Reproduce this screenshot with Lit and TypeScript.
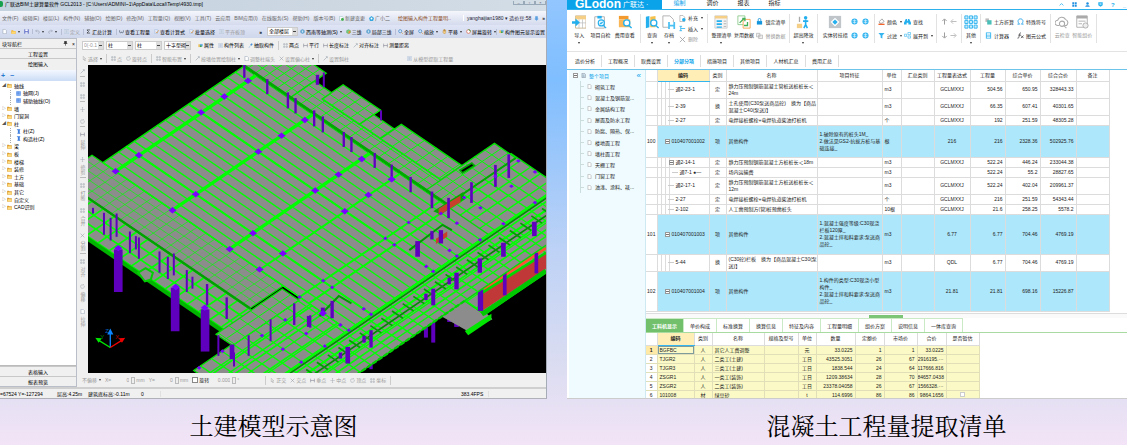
import { LitElement, html, svg, css, nothing } from "lit";
import { customElement } from "lit/decorators.js";
import { classMap } from "lit/directives/class-map.js";

/* ---------- icons, drawn on a 16 x 16 grid ---------- */
const glyphs: Record<string, unknown> = {
  page: svg`<path d="M3 1h7l4 4v10H3z" fill="#fff" stroke="#7c8ba0" stroke-width="1.4"/>`,
  pageGreen: svg`<path d="M2 1h8l3 3v11H2z" fill="#fff" stroke="#7aa" stroke-width="1.4"/><circle cx="11" cy="11" r="4.5" fill="#3fae49"/>`,
  star: svg`<path d="M8 0l8 6-3 10H3L0 6z" fill="#38a7e0"/><circle cx="8" cy="8" r="3" fill="#fff"/>`,
  open: svg`<path d="M1 4h6l1 2h7v9H1z" fill="#f2b632"/><path d="M4 8h12l-3 7H1z" fill="#ffd873"/>`,
  save: svg`<path d="M1 1h14v14H1z" fill="#5867c4"/><path d="M4 1h8v6H4zM4 10h8v5H4z" fill="#fff"/>`,
  undo: svg`<path d="M2 6h8a4 4 0 010 8M6 2L2 6l4 4" fill="none" stroke="#9aa3b5" stroke-width="2"/>`,
  redo: svg`<path d="M14 6H6a4 4 0 000 8M10 2l4 4-4 4" fill="none" stroke="#9aa3b5" stroke-width="2"/>`,
  list: svg`<path d="M1 2h14v12H1z" fill="#f2f6fb" stroke="#9db0cc" stroke-width="1.4"/><path d="M4 5h8M4 8h8M4 11h8" stroke="#8aa0c0" stroke-width="1.4"/>`,
  sigma: svg`<path d="M13 3H3l5 5-5 5h10" fill="none" stroke="#222" stroke-width="2"/>`,
  glasses: svg`<path d="M2 4v5a3 3 0 006 0 3 3 0 006 0V4" fill="none" stroke="#456" stroke-width="2"/>`,
  check: svg`<path d="M2 2h9v12H2z" fill="#e6eefb" stroke="#7d9dd0"/><path d="M6 9l3 4 6-9" fill="none" stroke="#d78a2a" stroke-width="2"/>`,
  drop: svg`<path d="M8 1l6 4v6l-6 4-6-4V5z" fill="#6fb3de" stroke="#33739f"/><path d="M8 5v6" stroke="#fff" stroke-width="2"/>`,
  cube: svg`<path d="M2 5l6-3 6 3v7l-6 3-6-3z" fill="#7ad07a" stroke="#2a8a3a"/><path d="M8 8v7l6-3V5z" fill="#e98b3a"/>`,
  lens: svg`<circle cx="7" cy="7" r="5" fill="#cfe6fa" stroke="#3b7fc4" stroke-width="2"/><path d="M11 11l4 4" stroke="#d68b2a" stroke-width="2.4"/>`,
  hand: svg`<path d="M4 8V4h2v3-6h2v6-5h2v5-3h2v7l-2 4H6L2 9z" fill="#f6cf83" stroke="#a9772c"/>`,
  spin: svg`<circle cx="8" cy="8" r="6" fill="#fff" stroke="#d6553b" stroke-width="2"/><path d="M8 2a6 6 0 016 6" fill="none" stroke="#35a146" stroke-width="3"/>`,
  props: svg`<path d="M1 4h8v9H1z" fill="#f1c35b"/><path d="M6 3h9v8H6z" fill="#6fb0e6"/><circle cx="9" cy="10" r="3" fill="#3aa24a"/>`,
  pick: svg`<path d="M2 14L9 7l-2-2 5-4 3 3-4 5-2-1-6 7z" fill="#4a90d9"/>`,
  dots: svg`<path d="M2 2h4v4H2zM10 2h4v4h-4zM2 10h4v4H2zM10 10h4v4h-4z" fill="none" stroke="#98a0ab" stroke-width="1.6"/>`,
  rule: svg`<path d="M2 2v12M14 2v12M2 8h12" fill="none" stroke="#778" stroke-width="1.6"/>`,
  slash: svg`<path d="M2 14L13 3M9 2h5v5" fill="none" stroke="#98a0ab" stroke-width="1.8"/>`,
  cursor: svg`<path d="M4 1l8 8H8l3 6-2 1-3-6-2 2z" fill="none" stroke="#999" stroke-width="1.3"/>`,
  ring: svg`<path d="M13 5a6 6 0 11-5-3M8 0l4 2-4 3" fill="none" stroke="#a5abb3" stroke-width="1.8"/>`,
  cross: svg`<path d="M2 2l12 12M14 2L2 14" stroke="#9a9fa6" stroke-width="1.8"/>`,
  move: svg`<path d="M8 1v14M1 8h14M6 3l2-2 2 2M6 13l2 2 2-2" fill="none" stroke="#a5abb3" stroke-width="1.6"/>`,
  folder: svg`<path d="M1 3h5l2 2h7v9H1z" fill="#eba52c" stroke="#b5760f"/><path d="M3 7h12v7H2z" fill="#ffdf85"/>`,
  net: svg`<path d="M1 1h14v14H1z" fill="#3f7fe0"/><path d="M6 1v14M11 1v14M1 6h14M1 11h14" stroke="#bcd5ff" stroke-width="1.2"/>`,
  column: svg`<path d="M2 1h12l-2 4v6l2 4H4l2-4V5z" fill="#3f7fe0"/>`,
  user: svg`<circle cx="8" cy="5" r="4" fill="#1f8fe0"/><path d="M1 15c0-6 14-6 14 0z" fill="#1f8fe0"/>`,
  bell: svg`<path d="M4 1h8v8h3l-7 6-7-6h3z" fill="#5b9fe0"/>`,
  doc: svg`<path d="M3 1h7l3 4v10H3z" fill="#fff" stroke="#8a8a8a" stroke-width="1.4"/>`,
  home: svg`<path d="M3 1h8l3 3v11H3z" fill="#dff3fc" stroke="#667" stroke-width="1.4"/><path d="M5 6h6M5 9h6M5 12h6" stroke="#456"/>`,
  import: svg`<path d="M4 1h12v14H4z" fill="#fff" stroke="#c9b48c"/><path d="M4 1h12v4H4z" fill="#f6cf86"/><path d="M4 9h12M8 5v10M12 5v10" stroke="#bbb" stroke-width=".8"/><path d="M0 7h4V4l5 4.500-5 4.500v-3H0z" fill="#24b0ee"/>`,
  selfcheck: svg`<path d="M2 2h11v13H2z" fill="#fff" stroke="#aaa"/><path d="M5 1h5v3H5z" fill="#24b0ee"/><circle cx="9.500" cy="9" r="3.500" fill="#e7f7ff" stroke="#24b0ee" stroke-width="1.300"/><path d="M12 12l3 3M8 9l1 1 2-2" fill="none" stroke="#24b0ee" stroke-width="1.300"/>`,
  fee: svg`<path d="M1 1h11v4H1z" fill="#f39a2e"/><path d="M1 5h13v9H1z" fill="#fbb757"/><circle cx="10" cy="9" r="3.500" fill="#fff" stroke="#24b0ee" stroke-width="1.500"/><path d="M12.500 12l3 3" stroke="#24b0ee" stroke-width="1.600"/>`,
  query: svg`<path d="M1 2l4-1v13l-4 1z" fill="#24b0ee"/><path d="M6 2l6-1v13H6z" fill="#f6c04c"/><circle cx="10" cy="9" r="3.500" fill="#fff" stroke="#24b0ee" stroke-width="1.500"/><path d="M12.500 12l3 3" stroke="#24b0ee" stroke-width="1.600"/>`,
  archive: svg`<path d="M1 1h8l4 4v9H1z" fill="#fff" stroke="#aaa"/><path d="M7 8h8v8H7z" fill="#4cc0f2"/><path d="M9 8h4v3H9zM9 13h4v3H9z" fill="#fff"/>`,
  tidy: svg`<path d="M1 1h14v14H1z" fill="#f4f4f4" stroke="#ccc"/><path d="M1 1h14v3H1z" fill="#f6cf86"/><path d="M3 6h6v2H3zM3 9.500h6v2H3zM3 13h6v1.500H3z" fill="#24b0ee"/><path d="M11 7h3M11 10h3M11 13h3" stroke="#aaa"/>`,
  reuse: svg`<path d="M1 1h8v10H1z" fill="#fff" stroke="#8cc98c"/><path d="M7 5h8v10H7z" fill="#fff" stroke="#f3a24c"/><path d="M3 9l5-5M6 4h3v3M8 12h4V8" fill="none" stroke="#3fb058" stroke-width="1.500"/>`,
  lock: svg`<path d="M2 7h12v8H2z" fill="#1596dc"/><path d="M5 7V4a3 3 0 016 0v3" fill="none" stroke="#1596dc" stroke-width="2"/>`,
  swap: svg`<path d="M1 3h8v8H1zM6 7h9v8H6z" fill="#eee" stroke="#aaa" stroke-width="1.400"/>`,
  tall: svg`<circle cx="11" cy="3" r="2" fill="#24b0ee"/><path d="M8 7h6M11 5v6M9 15l2-4 2 4" stroke="#24b0ee" stroke-width="1.800" fill="none"/><path d="M1 10h6v5H1z" fill="#f6cf86"/><path d="M4 2v6" stroke="#aaa" stroke-width="1.500"/>`,
  solid: svg`<path d="M1 1h14v14H1z" fill="#bfc5c9"/><path d="M3 8l5-5 5 5-5 5z" fill="#fff"/><path d="M5 8l3-3 3 3-3 3z" fill="#24b0ee"/>`,
  globe: svg`<circle cx="8" cy="8" r="7" fill="#35b5ef"/><path d="M4 6h8M4 10h8M8 3v10" stroke="#dff4ff" stroke-width="1.500"/>`,
  paint: svg`<path d="M3 8l6-6 5 6-5 4H4z" fill="#fff" stroke="#777" stroke-width="1.400"/><path d="M1 13h14v3H1z" fill="#f2662b"/>`,
  binoc: svg`<path d="M4 2h3v4h2V2h3l4 9v4h-6v-4H6v4H0v-4z" fill="#24b0ee"/>`,
  funnel: svg`<path d="M1 2h14l-5 6v7l-4-2V8z" fill="#35b5ef"/>`,
  expand: svg`<path d="M1 5h5v5H1zM9 1h6v5H9zM9 9h6v5H9z" fill="#fff" stroke="#35b5ef" stroke-width="1.400"/>`,
  up: svg`<path d="M8 15V3M3 7l5-5 5 5" fill="none" stroke="#9a9a9a" stroke-width="2.200"/>`,
  down: svg`<path d="M8 1v12M3 9l5 5 5-5" fill="none" stroke="#9a9a9a" stroke-width="2.200"/>`,
  left: svg`<path d="M15 8H3M7 3L2 8l5 5" fill="none" stroke="#bbb" stroke-width="2.200"/>`,
  right: svg`<path d="M1 8h12M9 3l5 5-5 5" fill="none" stroke="#bbb" stroke-width="2.200"/>`,
  other: svg`<g fill="#c9ecfb" stroke="#35b5ef" stroke-width="1.100"><path d="M1 1h3.500v3.500H1zM6.200 1h3.500v3.500H6.200zM11.500 1H15v3.500h-3.500zM1 6.200h3.500v3.500H1zM6.200 6.200h3.500v3.500H6.200zM11.500 6.200H15v3.500h-3.500zM1 11.500h3.500V15H1zM6.200 11.500h3.500V15H6.200zM11.500 11.500H15V15h-3.500z"/></g>`,
  earth: svg`<path d="M1 1h8v8H1z" fill="#bbb"/><path d="M5 5h10v10H5z" fill="#4cc0b8"/>`,
  omega: svg`<path d="M1 14h5c-6-5-4-12 2-12s8 7 2 12h5" fill="none" stroke="#24a0e8" stroke-width="2"/>`,
  calc: svg`<path d="M2 1h12v14H2z" fill="#35b5ef"/><path d="M4 3h8v3H4zM4 8h8v1.500H4zM4 11h8v2H4z" fill="#fff"/>`,
  fx: svg`<path d="M9 2c-3-1-3 3-4 7s-1 6-4 5M3 7h6M9 8l6 6M15 8l-6 6" fill="none" stroke="#333" stroke-width="1.600"/>`,
  cloud: svg`<path d="M5 12H3a3 3 0 010-6 5 5 0 019-1 4 4 0 011 7h-2" fill="none" stroke="#aaa" stroke-width="1.200"/><circle cx="8" cy="10" r="3" fill="none" stroke="#aaa" stroke-width="1.200"/><path d="M10 12l3 3" stroke="#aaa" stroke-width="1.200"/>`,
  smart: svg`<path d="M2 1h12v13H2z" fill="#fff" stroke="#aaa"/><path d="M2 1h12v3H2z" fill="#aaa"/><path d="M4 7h8M4 10h4" stroke="#aaa"/><circle cx="12" cy="12" r="3" fill="#eee" stroke="#aaa"/>`,
  plusDoc: svg`<path d="M2 1h7l4 4v10H2z" fill="#fff" stroke="#999" stroke-width="1.400"/><circle cx="11" cy="11" r="4" fill="#24b0ee"/>`,
  insert: svg`<path d="M1 3h6M1 13h6M4 3v10M4 8h10" fill="none" stroke="#24b0ee" stroke-width="1.800"/>`,
  chevUp: svg`<path d="M2 11l6-6 6 6" fill="none" stroke="#24b0ee" stroke-width="2.500"/>`,
  blocks: svg`<path d="M1 1h6v6H1zM9 1h6v6H9zM1 9h6v6H1zM9 9h6v6H9z" fill="#1f8fe0"/>`,
  shield: svg`<path d="M1 1h14v9l-7 5-7-5z" fill="#24b0ee"/><path d="M5 5h6v3H5z" fill="#fff"/>`,
  pin: svg`<path d="M5 1h6v7H5zM2 8h12M8 8v7" fill="#333" stroke="#333" stroke-width="2"/>`,
};
const icon = (name: string) => svg`<svg class="ic" viewBox="0 0 16 16" aria-hidden="true">${glyphs[name]}</svg>`;

/* ---------- building model ---------- */
const SLOPE = 0.683;
type P = [number, number];
/* k grows towards the front right, m towards the front left */
const pt = (k: number, m: number): P => [Math.round((k - m) / (2 * SLOPE)), Math.round((k + m) / 2)];
const line = (a: P, b: P) => `M${a[0]} ${a[1]}L${b[0]} ${b[1]}`;
const beamsK = (ks: number[], m1: number, m2: number, w: number, color = "#00ff00") =>
  svg`<path d=${ks.map((k) => line(pt(k, m1), pt(k, m2))).join("")} stroke=${color} stroke-width=${w} fill="none"/>`;
const beamsM = (ms: number[], k1: number, k2: number, w: number, color = "#00ff00") =>
  svg`<path d=${ms.map((m) => line(pt(k1, m), pt(k2, m))).join("")} stroke=${color} stroke-width=${w} fill="none"/>`;
const steps = (a: number, b: number, s: number) => {
  const out: number[] = [];
  for (let v = a; v <= b; v += s) out.push(v);
  return out;
};
const slab = (k1: number, k2: number, m1: number, m2: number, ks: number, ms: number, w: number) => svg`
  <polygon points=${[pt(k1, m1), pt(k2, m1), pt(k2, m2), pt(k1, m2)].join(" ")} fill="#8c8c8c" stroke="#00e000" stroke-width="4"/>
  ${beamsK(steps(k1 + ks, k2, ks), m1, m2, w)}${beamsM(steps(m1 + ms, m2, ms), k1, k2, w)}`;
const posts = (list: number[][], color = "#5f00bf") =>
  svg`${list.map(([x, y1, y2, w]) => svg`<rect x=${x - w / 2} y=${y1} width=${w} height=${y2 - y1} fill=${color}/>`)}`;
const nodes = (list: P[], r: number) =>
  svg`<path d=${list.map(([x, y]) => `M${x - r} ${y}l${r} ${-r * 0.8}l${r} ${r * 0.8}l${-r} ${r * 0.8}z`).join("")} fill="#7a00ff"/>`;

const model = () => svg`
<svg class="model" viewBox="24 15 1377 927" preserveAspectRatio="xMidYMid slice" role="img" aria-label="土建模型">
  ${posts([[1040, 780, 835, 12], [1062, 780, 850, 12], [1110, 730, 788, 12], [1132, 730, 803, 14], [875, 880, 930, 10]])}
  <polygon points="1085,770 1175,715 1240,780 1165,815" fill="#8c8c8c"/>
  <path d="M1157 815l80-52v18l-70 47z" fill="#00e600"/>
  ${slab(1480, 1597, -640, -65, 40, 44, 4)}
  <polygon points="1205,703 1401,578 1401,628 1205,757" fill="#c03838"/>
  <path d="M1215 690L1401 566" stroke="#ff5030" stroke-width="8"/>
  <path d="M1208 765L1401 635" stroke="#00c800" stroke-width="14"/>
  <path d="M1205 703L1401 580" stroke="#00d800" stroke-width="8"/>
  ${posts([[1204, 690, 755, 16], [1277, 640, 708, 11], [1372, 580, 642, 11]])}
  ${slab(311, 1115, 400, 516, 46, 38, 5)}
  <path d=${line(pt(311, 522), pt(1115, 522))} stroke="#00b400" stroke-width="12"/>
  <path d="M175 640l22-14 22 14-6 20-18 6z" fill="#8c8c8c" stroke="#00d000" stroke-width="6"/>
  ${slab(1167, 1514, -604, 700, 40, 44, 4)}
  ${beamsK([1216, 1262, 1320], 120, 700, 5)}
  ${slab(311, 1096, 262, 398, 36, 27, 2)}
  ${beamsM([398], 311, 1096, 7, "#00a000")}
  ${slab(1104, 1172, 273, 545, 34, 44, 3)}
  ${slab(356, 1363, -314, 262, 1007, 32, 4)}
  ${beamsK([408, 642, 876], -314, 262, 10)}
  ${beamsK([999, 1164, 1202], -314, 262, 6)}
  ${beamsM([166, -90], 356, 1363, 6)}
  ${slab(280, 545, -466, -320, 30, 29, 3)}
  ${slab(545, 1180, -418, -320, 40, 24, 3)}
  ${slab(615, 768, -466, -380, 38, 28, 3)}
  ${slab(768, 852, -438, -380, 42, 28, 3)}
  ${slab(853, 1102, -466, -380, 48, 28, 3)}
  ${slab(1102, 1190, -600, -320, 29, 40, 3)}
  ${beamsM([-320], 300, 1190, 7, "#00a800")}
  ${beamsK([1190], -600, -320, 6, "#00a800")}
  <path d="M1142 332l36-22 8 8-36 22z" fill="#000" stroke="#00b000" stroke-width="5"/>
  <path d="M1062 455l90-58 4 22-72 46z" fill="#00a800"/>
  <path d="M1078 448l66-40v20l-66 40zM1070 538l34-22v16l-34 22z" fill="#c8402c"/>
  <path d="M990 572l100-76 28 16M720 770l58-60 38 22" fill="none" stroke="#009800" stroke-width="6"/>
  ${beamsK([1363, 1384, 1410, 1440, 1468], -604, 600, 5)}
  ${beamsK([1373, 1425], -604, 600, 5, "#008c00")}
  ${beamsM(steps(-590, 490, 44), 1395, 1440, 5, "#00a000")}
  <path d=${line(pt(1514, -65), pt(1514, 700))} stroke="#00d000" stroke-width="7" stroke-dasharray="14 6"/>
  ${posts([
    [115, 570, 698, 26], [286, 685, 816, 26], [376, 750, 877, 26], [72, 460, 526, 6], [92, 475, 543, 6], [110, 462, 532, 6], [150, 516, 581, 6],
    [168, 530, 570, 6], [177, 534, 598, 6], [239, 576, 640, 6], [264, 592, 659, 6], [282, 582, 648, 6], [321, 632, 698, 6], [338, 652, 688, 6],
    [382, 674, 738, 7], [441, 714, 779, 7], [416, 828, 890, 6], [457, 856, 900, 14], [463, 880, 922, 6], [507, 828, 890, 6], [573, 780, 846, 6], [644, 732, 797, 7],
    [688, 770, 803, 12], [39, 445, 462, 6], [494, 15, 54, 7], [563, 58, 103, 7], [625, 98, 146, 7], [648, 115, 161, 7], [704, 152, 200, 7],
    [730, 170, 218, 7], [733, 38, 82, 6], [714, 45, 75, 10], [793, 217, 262, 7], [816, 232, 277, 7], [886, 280, 325, 7], [905, 152, 182, 6], [937, 315, 360, 7], [994, 352, 398, 7],
    [1058, 396, 446, 8], [1108, 415, 476, 8], [1177, 368, 430, 8], [1249, 316, 382, 8], [1289, 284, 355, 8], [1015, 545, 592, 14], [1085, 512, 552, 13], [1058, 515, 540, 10],
    [730, 745, 768, 12], [758, 725, 777, 10], [692, 768, 805, 7], [1366, 487, 530, 14], [1273, 550, 592, 14], [1202, 597, 640, 13], [1132, 640, 690, 13],
    [1062, 688, 738, 12], [1110, 655, 675, 10], [1040, 703, 722, 10], [875, 813, 865, 10], [854, 830, 850, 10], [805, 863, 913, 14], [783, 880, 898, 10],
  ])}
  ${nodes([[107, 335], [177, 287], [364, 158], [434, 110], [505, 63], [278, 452], [348, 404], [536, 276], [606, 228], [676, 181], [450, 569], [520, 521],
    [707, 393], [777, 345], [847, 298], [540, 630], [610, 582], [796, 455], [867, 406], [937, 359], [115, 566], [288, 683], [375, 745], [730, 762]], 12)}
  ${nodes([[660, 713], [731, 664], [758, 684], [918, 537], [988, 489], [945, 556], [853, 749], [875, 765], [1062, 636], [1203, 541], [1273, 493], [1368, 429],
    [1133, 590], [808, 813], [736, 861], [610, 870], [665, 909], [547, 829], [680, 823], [1041, 621], [1111, 573], [1133, 491], [1204, 445], [1155, 414],
    [1249, 350], [1297, 380], [1318, 304], [1368, 337], [783, 797], [428, 876], [617, 782], [1085, 462], [358, 926]], 7)}
  <g fill="none" stroke-width="4">
    <path d="M91 865V816M85 824l6-12 6 12z" stroke="#0a84ff" fill="#0a84ff"/>
    <path d="M91 865L54 842M50 838l12 1-6 8z" stroke="#00e600" fill="#00e600"/>
    <path d="M91 865L128 842M132 838l-12 1 6 8z" stroke="#f00000" fill="#f00000"/>
  </g>
  <text x="76" y="822" font-size="18" fill="#0a60c0">Z</text>
  <text x="61" y="840" font-size="18" fill="#009000">Y</text>
  <text x="106" y="840" font-size="18" fill="#b00000">X</text>
</svg>`;

/* ---------- data ---------- */
const menus = ["文件(F)", "编辑(E)", "楼层(L)", "构件(N)", "辅轴(O)", "绘图(D)", "修改(M)", "工程量(Q)", "视图(V)", "工具(T)", "云应用", "BIM应用(I)", "在线服务(S)", "帮助(H)", "版本号(B)"];
const tree: [number, string, string, string][] = [
  [0, "◢", "folder", "轴线"], [1, "", "net", "轴网(J)"], [1, "", "net", "辅助轴线(O)"], [0, "▷", "folder", "墙"], [0, "▷", "folder", "门窗洞"],
  [0, "◢", "folder", "柱"], [1, "", "column", "柱(Z)"], [1, "", "column", "构造柱(Z)"], [0, "▷", "folder", "梁"], [0, "▷", "folder", "板"],
  [0, "▷", "folder", "楼梯"], [0, "▷", "folder", "装修"], [0, "▷", "folder", "土方"], [0, "▷", "folder", "基础"], [0, "▷", "folder", "其它"],
  [0, "▷", "folder", "自定义"], [0, "▷", "folder", "CAD识别"],
];
const sideTools: [string, string][] = [["slash", ""], ["dots", ""], ["dots", ""], ["move", ""], ["ring", ""], ["rule", "延伸"], ["move", "修剪"], ["dots", "打断"], ["dots", "合并"], ["cross", "分割"], ["dots", "对齐"], ["ring", "偏移"], ["page", "拉伸"]];
const projects = ["砌筑工程", "混凝土及钢筋混...", "金属结构工程", "屋面及防水工程", "防腐、隔热、保...", "楼地面工程", "墙柱面工程", "天棚工程", "门窗工程", "油漆、涂料、裱..."];

interface Item { no?: string; lvl: number; code: string; kind: string; name: string; spec?: string; unit: string; expr: string; qty: string; price: string; total: string; size: string; hot?: boolean }
const items: Item[] = [
  { lvl: 2, code: "通2-23-1", kind: "定", name: "静力压预制钢筋混凝土管桩送桩桩长＜\n24m", unit: "m3", expr: "GCLMXXJ", qty: "504.56", price: "650.95", total: "328443.33", size: "mid" },
  { lvl: 2, code: "2-39", kind: "换", name: "土孔使用(C30泵送商品砼)　换为【商品\n混凝土C40(泵送)】", unit: "m3", expr: "GCLMXXJ", qty: "66.35", price: "607.41", total: "40301.65", size: "mid" },
  { lvl: 2, code: "2-27", kind: "定", name: "电焊接桩螺栓+电焊轨道柴油打桩机", unit: "个", expr: "GCLMXXJ", qty: "192", price: "251.59", total: "48305.28", size: "low" },
  { no: "100", lvl: 1, code: "010407001002", kind: "项", name: "其他构件", spec: "1.破除原有的桩头1M_\n2.做法见GS2-抗拔方桩与基\n础连接_", unit: "根", expr: "216", qty: "216", price: "2328.36", total: "502925.76", size: "big", hot: true },
  { lvl: 3, code: "通2-14-1", kind: "定", name: "静力压预制钢筋混凝土方桩桩长＜18m", unit: "m3", expr: "GCLMXXJ", qty: "522.24", price: "446.24", total: "233044.38", size: "low" },
  { lvl: 4, code: "通7-1 ●—", kind: "定", name: "场内运输费", unit: "m3", expr: "", qty: "522.24", price: "55.2", total: "28827.65", size: "low" },
  { lvl: 2, code: "通2-17-1", kind: "定", name: "静力压预制钢筋混凝土方桩送桩桩长＜\n12m", unit: "m3", expr: "GCLMXXJ", qty: "522.24", price: "402.04", total: "209961.37", size: "mid" },
  { lvl: 2, code: "2-27", kind: "定", name: "电焊接桩螺栓+电焊轨道柴油打桩机", unit: "个", expr: "GCLMXXJ", qty: "216", price: "251.59", total: "54343.44", size: "low" },
  { lvl: 2, code: "2-102", kind: "定", name: "人工凿预制方(管)桩预凿桩头", unit: "10根", expr: "GCLMXXJ", qty: "21.6", price: "258.25", total: "5578.2", size: "low" },
  { no: "101", lvl: 1, code: "010407001003", kind: "项", name: "其他构件", spec: "1.混凝土强度等级:C30现浇\n栏板120厚_\n2.混凝土拌和料要求:泵送商\n品砼_", unit: "m3", expr: "6.77", qty: "6.77", price: "704.46", total: "4769.19", size: "huge", hot: true },
  { lvl: 2, code: "5-44", kind: "换", name: "(C30砼)栏板　换为【商品混凝土C30(泵\n送)】", unit: "m3", expr: "QDL", qty: "6.77", price: "704.46", total: "4769.19", size: "mid" },
  { no: "102", lvl: 1, code: "010407001004", kind: "项", name: "其他构件", spec: "1.构件的类型:C30现浇小型\n构件_\n2.混凝土拌和料要求:泵送商\n品砼_", unit: "m3", expr: "21.81", qty: "21.81", price: "698.16", total: "15226.87", size: "huge", hot: true },
];
const labour: string[][] = [
  ["BGFBC", "人", "其它人工费调整", "", "元", "33.0225", "1", "1", "33.0225"],
  ["TJGR2", "人", "二类工(土建)", "", "工日", "43525.3051", "26", "67", "2916195.···"],
  ["TJGR3", "人", "三类工(土建)", "", "工日", "1838.544", "24", "64", "117666.816"],
  ["ZSGR1", "人", "一类工(装饰)", "", "工日", "1209.38634", "28", "70", "84657.0438"],
  ["ZSGR2", "人", "二类工(装饰)", "", "工日", "23378.04058", "26", "67", "1566328.···"],
  ["101008", "材", "绿豆砂", "", "t", "114.6996", "86", "86", "9864.1656"],
];

const base = css`
  * { box-sizing: border-box; }
  button, select, input { font: inherit; color: inherit; margin: 0; padding: 0; border: 0; background: none; border-radius: 0; min-width: 0; }
  button { display: flex; align-items: center; gap: 1px; white-space: nowrap; }
  .ic { width: 5px; height: 5px; flex: none; display: block; }
  .caret::after { content: ""; border: 1px solid transparent; border-top: 2px solid #333; border-bottom: 0; margin-left: 1px; }
  .dim { color: #999; }
`;

@customElement("takeoff-window")
class TakeoffWindow extends LitElement {
  static styles = [base, css`
    :host { display: grid; grid-template-rows: 11px 14px 13px minmax(0, 1fr) 11px; min-width: 0; min-height: 0; overflow: hidden; background: #f0f0f0; color: #000;
      font: 5px/6px "Liberation Sans", "Noto Sans CJK SC", sans-serif; border-right: 1px solid #a5acb8; border-bottom: 1px solid #b0b0b8; }
    .title { display: flex; align-items: flex-start; gap: 2px; padding-top: 1px; background: linear-gradient(90deg, #c4d2df, #ccd7e2 60%, #d3dde6); }
    .logo { width: 3px; height: 6px; background: #18a14c; border-radius: 0 2px 2px 0; }
    .caps { margin-left: auto; display: flex; }
    .caps button { width: 11px; height: 4px; justify-content: center; border: 1px solid #9aa9b8; border-top: 0; font-size: 4px; color: #556; }
    .menu { display: flex; align-items: center; gap: 4px; padding-left: 2px; background: linear-gradient(#f4f6fb, #d5dbee); color: #666; overflow: hidden; }
    .tip { margin: 0 0 0 4px; color: #8a4a1b; }
    .who { margin-left: auto; display: flex; gap: 3px; align-items: center; color: #223; border-left: 1px solid #fff; padding: 0 1px 0 3px; }
    .bar { display: flex; align-items: center; gap: 4px; overflow: hidden; min-width: 0; }
    .bar > * { flex: none; }
    .main { background: linear-gradient(#dfe5f5, #cfd7ec); padding-left: 2px; display: grid; grid-template-columns: 30px 29px 22px 33px 151px 33px 95px 101px 1fr; gap: 0; }
    .bar .grp { display: flex; align-items: center; gap: 4px; min-width: 0; overflow: hidden; }
    .lined { border-left: 1px solid #b6bfd6; padding-left: 2px; }
    .more { margin-left: auto; margin-right: 5px; }
    select { appearance: none; background: linear-gradient(#444, #444) right 1px center / 3px 1px no-repeat, linear-gradient(90deg, transparent calc(100% - 5px), #ddd 0), #fff; border: 1px solid #ccc; height: 9px; width: 27px; padding: 0 1px; line-height: 7px; }
    .floor { width: 31px; }
    .body { display: grid; grid-template-columns: 77px minmax(0, 1fr); min-height: 0; }
    .nav { display: grid; grid-template-rows: 9px 10px 10px 2px 11px minmax(0, 1fr) 10px 10px; border: 1px solid #b9bec8; border-left: 0; min-height: 0; }
    .navhead { display: flex; align-items: center; gap: 4px; padding: 0 1px 0 2px; }
    .navhead .pin { margin-left: auto; }
    .nav > button { justify-content: center; border-top: 1px solid #c8c8c8; }
    .pm { display: flex; gap: 5px; align-items: center; padding-left: 1px; color: #2878d0; background: linear-gradient(#f4f8ff, #cbdcf5); font-weight: bold; font-size: 7px; }
    .tree { background: #fff; padding: 1px 0 0 2px; border-bottom: 1px solid #bbb; overflow: hidden; }
    .tree ul { display: grid; grid-template-rows: repeat(17, 1fr); height: 129px; margin: 0; padding: 0; list-style: none; }
    .tree li { display: flex; align-items: center; gap: 2px; }
    .tree .tw { width: 3px; font-size: 4px; color: #555; }
    .tree .kid { margin-left: 8px; border-left: 1px dotted #aaa; }
    .stage { display: grid; grid-template-rows: 14px 13px minmax(0, 1fr) 14px; min-width: 0; min-height: 0; }
    .tools { padding-left: 5px; gap: 4px; }
    .tools select:first-child { color: #999; width: 22px; }
    .tools select { margin-right: -2px; }
    .gap { width: 1px; }
    .sep { width: 1px; height: 9px; background: #ccc; }
    .pull { margin-left: 54px; }
    .work { display: grid; grid-template-columns: 11px minmax(0, 1fr); min-height: 0; }
    .side { display: flex; flex-direction: column; align-items: center; gap: 5px; padding-top: 4px; color: #999; overflow: hidden; }
    .side button { flex-direction: column; gap: 3px; padding-bottom: 2px; }
    .side .cut { border-bottom: 1px solid #bbb; }
    .side span { writing-mode: vertical-rl; text-orientation: upright; line-height: 6px; }
    .canvas { background: #000; overflow: hidden; min-height: 0; }
    .model { display: block; width: 100%; height: 100%; }
    .snap { color: #999; padding-left: 5px; }
    .snap label { display: flex; align-items: center; gap: 1px; }
    .snap input { width: 18px; text-align: right; padding-right: 1px; height: 8px; }
    .snap input[type="checkbox"] { appearance: none; width: 6px; height: 6px; border: 1px solid #888; background: #fff; }
    .spin { width: 4px; height: 7px; border: 1px solid #bbb; background: linear-gradient(#eee 50%, #aaa 50%, #eee 60%); }
    .snap .on { color: #222; }
    .snap .first { margin-left: 22px; }
    .status { display: grid; grid-template-columns: 57px 31px 53px 20px 98px minmax(0, 1fr) 28px 57px; align-items: center; border-top: 2px solid #cfcfcf; white-space: nowrap; }
    .status span { border-right: 1px solid #e0e0e0; }
    .status .free { border: 0; }
  `];
  tool(ic: string, label: string, cls = "") {
    return html`<button class=${cls} aria-label=${label || ic}>${icon(ic)}${label}</button>`;
  }
  combo(name: string, value: string, cls = "") {
    return html`<select class=${cls} aria-label=${name}><option>${value}</option></select>`;
  }
  render() {
    return html`
      <div class="title"><i class="logo"></i>广联达BIM土建算量软件 GCL2013 - [C:\\Users\\ADMINI~1\\AppData\\Local\\Temp\\4930.tmp]
        <div class="caps"><button aria-label="最小化">–</button><button aria-label="最大化">▫</button><button aria-label="关闭">×</button></div></div>
      <nav class="menu">${menus.map((m) => html`<button>${m}</button>`)}
        ${this.tool("pageGreen", "新建变更")}${this.tool("star", "广小二")}
        <p class="tip">绘图输入构件工程量明..</p>
        <div class="who">yanghaijian1980 ▾ 造价豆:58 ${icon("bell")}<b>»</b></div></nav>
      <div class="bar main">
        <div class="grp">${this.tool("page", "")}${this.tool("open", "", "caret")}${this.tool("save", "")}</div>
        <div class="grp lined">${this.tool("undo", "", "caret")}${this.tool("redo", "", "caret")}</div>
        <div class="grp lined dim">${this.tool("list", "定义")}</div>
        <div class="grp lined">${this.tool("sigma", "汇总计算")}</div>
        <div class="grp lined">${this.tool("glasses", "查看工程量")}${this.tool("check", "查看计算式")}${this.tool("check", "批量选择")}${this.tool("list", "平齐板顶", "dim")}<b class="more">»</b></div>
        <div class="grp">${this.combo("楼层", "全部楼层", "floor")}</div>
        <div class="grp">${this.tool("drop", "西南等轴测(S)", "caret")}${this.tool("cube", "三维")}${this.tool("drop", "局部三维")}</div>
        <div class="grp lined">${this.tool("lens", "全屏")}${this.tool("lens", "缩放", "caret")}${this.tool("hand", "平移", "caret")}${this.tool("spin", "屏幕旋转", "caret")}</div>
        <div class="grp lined">${this.tool("props", "构件图元显示设置")}</div>
      </div>
      <div class="body">
        <aside class="nav">
          <div class="navhead">块导航栏<span class="pin">${icon("pin")}</span>×</div>
          <button>工程设置</button><button>绘图输入</button><i></i>
          <div class="pm"><span>+</span><span>−</span></div>
          <div class="tree"><ul>${tree.map(([lvl, tw, ic, label]) => html`<li class=${classMap({ kid: lvl === 1 })}><span class="tw">${tw}</span>${icon(ic)}${label}</li>`)}</ul></div>
          <button>表格输入</button><button>报表预览</button>
        </aside>
        <section class="stage">
          <div class="bar tools">
            ${this.combo("标高", "0(-0.1")}${this.combo("类型", "柱")}${this.combo("构件", "柱")}${this.combo("名称", "十字型砌")}<i class="gap"></i>
            ${this.tool("props", "属性")}${this.tool("list", "构件列表")}${this.tool("pick", "抽取构件")}<i class="sep"></i>
            ${this.tool("dots", "两点")}${this.tool("rule", "平行")}${this.tool("rule", "长度标注")}${this.tool("slash", "对齐标注")}${this.tool("rule", "测量距离")}
          </div>
          <div class="bar tools dim">
            ${this.tool("cursor", "选择", "caret")}<i class="sep"></i>${this.tool("dots", "点")}${this.tool("ring", "旋转点")}<i class="sep"></i>
            ${this.tool("dots", "智能布置", "caret")}<i class="sep"></i>${this.tool("slash", "按墙位置绘制柱", "caret")}${this.tool("page", "调整柱端头")}${this.tool("cross", "设置偏心柱", "caret")}<i class="sep"></i>
            ${this.tool("slash", "设置斜柱")}<span class="pull">${this.tool("list", "从模型提取工程量")}</span>
          </div>
          <div class="work">
            <div class="side">${sideTools.map(([ic, label], i) => html`<button class=${classMap({ cut: [0, 2, 4, 6, 9].includes(i) })} aria-label=${label || "工具"}>${icon(ic)}${label ? html`<span>${label}</span>` : nothing}</button>`)}</div>
            <div class="canvas">${model()}</div>
          </div>
          <div class="bar snap">
            <button class="caret">不偏移</button>
            <label>X=<input value="0" /><i class="spin"></i>mm</label>
            <label>Y=<input value="0" /><i class="spin"></i>mm</label>
            <label class="on"><input type="checkbox" />旋转</label>
            <label><input value="0.000" aria-label="角度" /><i class="spin"></i>°</label>
            <i class="first sep"></i>
            ${this.tool("cursor", "正交")}${this.tool("cross", "交点")}${this.tool("rule", "垂点")}${this.tool("move", "中点")}${this.tool("ring", "顶点")}${this.tool("dots", "坐标")}<i class="sep"></i>
          </div>
        </section>
      </div>
      <footer class="status"><span class="free">=67524 Y=-127294</span><span class="free">层高:4.25m</span><span class="free">建筑底标高:-0.11m</span><span>0</span><span></span><span></span><span>383.4FPS</span><span class="free"></span></footer>`;
  }
}

@customElement("pricing-window")
class PricingWindow extends LitElement {
  static styles = [base, css`
    :host { display: grid; grid-template-rows: 10px 42px 18px minmax(0, 1fr); min-width: 0; min-height: 0; overflow: hidden; background: #fff; color: #222; border-bottom: 1px solid #ccc;
      font: 5px/6px "Liberation Sans", "Noto Sans CJK SC", sans-serif; }
    .top { display: flex; height: 10px; border-bottom: 1px solid #2cb1ee; font-size: 6px; }
    .brand { flex: none; display: flex; align-items: center; gap: 2px; width: 95px; padding: 0 0 0 8px; background: #0aa3ea; color: #fff; font-size: 7px; line-height: 9px; white-space: nowrap; }
    .brand b { font: bold 12px/9px "Liberation Sans", sans-serif; }
    .top > button { width: 31px; justify-content: center; padding-bottom: 3px; }
    .top > .on { width: 35px; color: #0aa3ea; }
    .sys { margin-left: auto; display: flex; align-items: center; gap: 8px; padding-right: 1px; color: #24b0ee; }
    .ribbon { display: grid; grid-template-columns: 74px 67px 82px 28px 57px 62px 25px 19px 70px 46px 1fr; border-bottom: 1px solid #e3e3e3; padding: 4px 0; overflow: hidden; }
    .rg { display: flex; justify-content: space-evenly; border-right: 1px solid #e2e2e2; padding: 0 1px; min-width: 0; height: 29px; }
    .rg:last-child { border: 0; }
    .big { flex-direction: column; gap: 3px; align-self: flex-start; padding-top: 1px; }
    .big .ic { width: 14px; height: 14px; }
    .big.caret::after { margin: 1px 0 0; }
    .col { display: flex; flex-direction: column; justify-content: space-evenly; gap: 3px; }
    .col .ic { width: 7px; height: 7px; }
    .col button { gap: 2px; }
    .tabs { display: flex; padding: 3px 0 0 2px; border-bottom: 1px solid #6cc4ea; }
    .tabs button { width: 33px; height: 12px; justify-content: center; border-right: 1px solid #ddd; }
    .tabs .wide { width: 39px; }
    .tabs .on { color: #0aa3ea; font-weight: bold; }
    .body { display: grid; grid-template-columns: 77px minmax(0, 1fr); min-height: 0; margin-left: 2px; }
    .tree { background: #effbfe; border-right: 1px solid #cfe9f2; padding: 0 4px; }
    .root { display: flex; align-items: center; gap: 3px; height: 11px; color: #0aa3ea; }
    .root span:last-child { margin-left: auto; font-size: 8px; }
    .box { width: 5px; height: 5px; border: 1px solid #999; flex: none; background: linear-gradient(#777, #777) center / 3px 1px no-repeat #fff; }
    .tree ul { margin: 0 0 0 7px; padding: 0; list-style: none; display: grid; grid-template-rows: repeat(10, 1fr); height: 112px; }
    .tree li { display: flex; align-items: center; gap: 3px; border-left: 1px solid #cdd; white-space: nowrap; }
    .tree li::before { content: ""; width: 3px; border-top: 1px solid #cdd; }
    .grid { display: grid; grid-template-rows: 243px 5px 15px minmax(0, 1fr); min-width: 0; min-height: 0; }
    .list { overflow: hidden; }
    table { border-collapse: collapse; table-layout: fixed; }
    td, th { border: 0 solid #dcdcdc; border-width: 0 1px 1px 0; padding: 0 2px; font-weight: normal; overflow: hidden; white-space: pre; line-height: 7px; text-align: center; }
    td.l { text-align: left; }
    td.r { text-align: right; }
    th { height: 11px; }
    .main { width: 463px; }
    .c1 { width: 11px; } .c2 { width: 52px; } .c3 { width: 17px; } .c4 { width: 91px; } .c5 { width: 65px; } .c6 { width: 19px; } .c7 { width: 33px; } .c8 { width: 36px; } .c9, .c10 { width: 35px; } .c11 { width: 36px; } .c12 { width: 33px; }
    .low { height: 10px; } .mid { height: 17px; } .big-row { height: 32px; } .huge { height: 40px; }
    .low td { line-height: 6px; }
    .hot td { background: #ade7fb; }
    .hot td:first-child { background: #fff; }
    .main td:first-child { padding: 0; }
    th.key { background: #ffeeb6; font-weight: bold; border-bottom-color: #35b5ef; }
    .code { padding: 0; background-image: repeating-linear-gradient(90deg, transparent 0 3px, #dcdcdc 3px 4px); background-size: 12px 100%; background-repeat: no-repeat; }
    .hot td.code { background: #ade7fb; }
    .code div { display: flex; align-items: center; gap: 2px; }
    .lvl1 { padding-left: 7px; }
    .lvl2 { padding-left: 10px; }
    .lvl2::before { content: ""; width: 6px; border-top: 1px solid #ccc; }
    .lvl3 { padding-left: 11px; }
    .lvl4 { padding-left: 14px; }
    .lvl4::before { content: ""; width: 6px; border-top: 1px solid #ccc; }
    .split { display: flex; justify-content: center; align-items: center; padding-right: 2px; background: #fafafa; border-top: 1px solid #ddd; }
    .split i { width: 34px; height: 3px; background: #7cc576; }
    .sub { display: flex; border-bottom: 1px solid #a8dba0; }
    .sub button { flex: none; width: 33px; justify-content: center; border: 1px solid #c9eac4; border-width: 1px 1px 0 0; }
    .sub .wide { width: 38px; }
    .sub .on { width: 38px; background: #72bf6c; color: #fff; font-weight: bold; }
    .mat { width: 333px; }
    .mat th { height: 12px; }
    .mat tbody tr { height: 9px; }
    .mat td { line-height: 6px; background: #fbfac6; border-color: #e0dfb8; }
    .mat td.r { padding-left: 0; }
    .mat td:first-child { background: #fff; padding: 0; }
    .mat tr:first-child td:first-child { background: #ffe9a6; font-weight: bold; }
    .mat tr:first-child td:nth-child(2) { box-shadow: inset 0 0 0 1px #7f9c9c; }
    .m2 { width: 37px; } .m3, .m6 { width: 18px; } .m4 { width: 52px; } .m5 { width: 34px; } .m7 { width: 39px; } .m8 { width: 29px; } .m9 { width: 33px; } .m10 { width: 29px; } .m11 { width: 33px; }
    .mat input { appearance: none; width: 5px; height: 5px; border: 1px solid #ccc; background: #fff; display: block; margin: 0 auto; }
    .bottom { overflow: hidden; }
  `];
  big(ic: string, label: string, cls = "") {
    return html`<button class="big ${cls}">${icon(ic)}${label}</button>`;
  }
  small(ic: string, label: string, cls = "") {
    return html`<button class=${cls} aria-label=${label || ic}>${icon(ic)}${label}</button>`;
  }
  render() {
    const tabs = ["造价分析", "工程概况", "取费设置", "分部分项", "措施项目", "其他项目", "人材机汇总", "费用汇总"];
    const subs = ["工料机显示", "单价构成", "标准换算", "换算信息", "特征及内容", "工程量明细", "组价方案", "说明信息", "一体库查询"];
    const heads = ["", "编码", "类别", "名称", "项目特征", "单位", "汇总类别", "工程量表达式", "工程量", "综合单价", "综合合价", "备注"];
    const mats = ["", "编码", "类别", "名称", "规格及型号", "单位", "数量", "定额价", "市场价", "合价", "是否暂估"];
    return html`
      <header class="top">
        <div class="brand"><b>GLodon</b>广联达 ·</div>
        <button class="on">编制</button><button>调价</button><button>报表</button><button>指标</button>
        <div class="sys">${icon("chevUp")}${icon("blocks")}${icon("user")}${icon("shield")}<b>?</b><b>_</b></div>
      </header>
      <div class="ribbon">
        <div class="rg">${this.big("import", "导入", "caret")}${this.big("selfcheck", "项目自检")}${this.big("fee", "费用查看")}</div>
        <div class="rg">${this.big("query", "查询", "caret")}${this.big("archive", "存档", "caret")}
          <div class="col">${this.small("plusDoc", "补充", "caret")}${this.small("insert", "插入", "caret")}${this.small("cross", "删除", "dim")}</div></div>
        <div class="rg">${this.big("tidy", "整理清单", "caret")}${this.big("reuse", "复用数据")}
          <div class="col">${this.small("lock", "锁定清单")}${this.small("swap", "替换数据", "dim")}</div></div>
        <div class="rg">${this.big("tall", "超高降效", "caret")}</div>
        <div class="rg">${this.big("solid", "实体转技措")}<div class="col">${this.small("globe", "")}${this.small("globe", "")}</div><div class="col">${this.small("globe", "")}${this.small("globe", "")}</div></div>
        <div class="rg"><div class="col">${this.small("paint", "颜色", "caret")}${this.small("funnel", "过滤", "caret")}</div>
          <div class="col">${this.small("binoc", "查找")}${this.small("expand", "展开到", "caret")}</div></div>
        <div class="rg"><div class="col">${this.small("up", "")}${this.small("down", "")}</div><div class="col">${this.small("left", "")}${this.small("right", "")}</div></div>
        <div class="rg">${this.big("other", "其他", "caret")}</div>
        <div class="rg"><div class="col">${this.small("earth", "土方折算")}${this.small("calc", "计算器")}</div><div class="col">${this.small("omega", "特殊符号")}${this.small("fx", "图元公式")}</div></div>
        <div class="rg">${this.big("cloud", "云检查", "dim")}${this.big("smart", "智能组价", "dim")}</div>
        <div class="rg"></div>
      </div>
      <nav class="tabs">${tabs.map((t) => html`<button class=${classMap({ on: t === "分部分项", wide: t.length > 4 })}>${t}</button>`)}</nav>
      <div class="body">
        <aside class="tree">
          <div class="root"><i class="box"></i>${icon("home")}<span>整个项目</span><span>«</span></div>
          <ul>${projects.map((p) => html`<li>${icon("doc")}${p}</li>`)}</ul>
        </aside>
        <div class="grid">
          <div class="list"><table class="main">
            <colgroup>${heads.map((_, i) => html`<col class="c${i + 1}" />`)}</colgroup>
            <thead><tr>${heads.map((h) => html`<th class=${classMap({ key: h === "编码" })}>${h}</th>`)}</tr></thead>
            <tbody>${items.map((r) => html`<tr class="${r.size === "big" ? "big-row" : r.size} ${r.hot ? "hot" : ""}">
              <td>${r.no ?? ""}</td><td class="code l"><div class="lvl${r.lvl}">${r.lvl % 2 ? html`<i class="box"></i>` : nothing}${r.code}</div></td><td>${r.kind}</td><td class="l">${r.name}</td><td class="l">${r.spec ?? ""}</td>
              <td class="l">${r.unit}</td><td></td><td>${r.expr}</td><td class="r">${r.qty}</td><td class="r">${r.price}</td><td class="r">${r.total}</td><td></td></tr>`)}</tbody>
          </table></div>
          <div class="split"><i></i></div>
          <nav class="sub">${subs.map((t, i) => html`<button class=${classMap({ on: i === 0, wide: t.length > 4 })}>${t}</button>`)}</nav>
          <div class="bottom"><table class="mat">
            <colgroup>${mats.map((_, i) => html`<col class=${i ? `m${i + 1}` : "c1"} />`)}</colgroup>
            <thead><tr>${mats.map((h) => html`<th class=${classMap({ key: h === "编码" })}>${h}</th>`)}</tr></thead>
            <tbody>${labour.map((r, i) => html`<tr><td>${i + 1}</td>${r.map((c, j) => html`<td class=${j === 0 || j === 2 ? "l" : j > 4 ? "r" : ""}>${c}</td>`)}
              <td>${i === 5 ? html`<input type="checkbox" aria-label="是否暂估" />` : nothing}</td></tr>`)}</tbody>
          </table></div>
        </div>
      </div>`;
  }
}

@customElement("app-root")
class AppRoot extends LitElement {
  static styles = css`
    :host { display: block; background: linear-gradient(#92c6ff, #7fbeff 18%, #bdd2f6 56%, #dcddf1 83%, #f3e4f7); }
    .page { display: grid; grid-template-columns: minmax(0, 547fr) minmax(0, 560fr); column-gap: 20px; grid-template-rows: minmax(0, 1fr) 46px; height: 100vh; min-height: 440px; }
    h2 { margin: 0; padding-top: 9px; text-align: center; color: #000; font: 24px/34px "Noto Serif CJK SC", "Noto Sans CJK SC", serif; }
    .end { padding-left: 79px; }
  `;
  render() {
    return html`<main class="page"><takeoff-window></takeoff-window><pricing-window></pricing-window>
      <h2>土建模型示意图</h2><h2 class="end">混凝土工程量提取清单</h2></main>`;
  }
}
